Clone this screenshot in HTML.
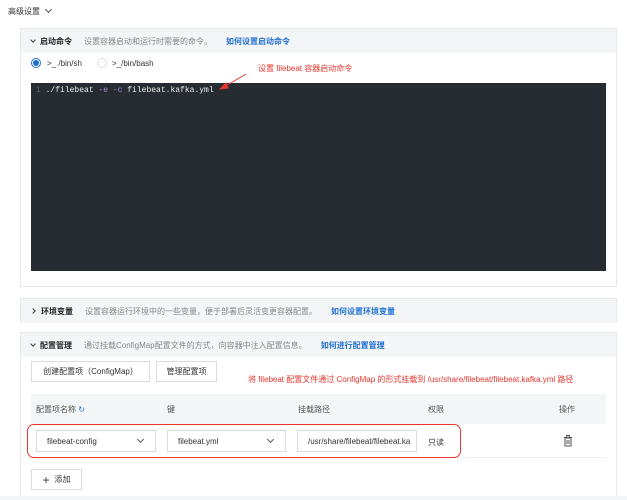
<!DOCTYPE html>
<html><head><meta charset="utf-8"><style>
*{box-sizing:border-box;margin:0;padding:0}
body{width:627px;height:500px;background:#fff;font-family:"Liberation Sans","Noto Sans CJK SC",sans-serif;font-size:8px;color:#333;position:relative;overflow:hidden}
.a{position:absolute;white-space:nowrap}
.panel{position:absolute;left:20px;width:597px;border:1px solid #e6e8eb;background:#fff}
.hd{height:24px;background:#f3f5f7;display:flex;align-items:center;padding-left:10px;font-size:8px}
.hd b{font-weight:bold;color:#222;margin-right:12px}
.hd .d{color:#888;margin-right:14px}
.hd .l{color:#1f6fd1;font-weight:bold}
.btn{position:absolute;border:1px solid #d8dbe0;background:#fff;display:flex;align-items:center;justify-content:center;font-size:8px;color:#333}
.sel{position:absolute;border:1px solid #d8dbe0;height:22px;top:430px;display:flex;align-items:center;padding-left:10px;font-size:8px;color:#333}
.red{color:#e8352e}
</style></head><body>
<div class="a" style="left:8px;top:6px;font-size:8px">高级设置 <span style="display:inline-block;width:5px;height:5px;border-right:1px solid #555;border-bottom:1px solid #555;transform:rotate(45deg);margin-left:4px;position:relative;top:-2px"></span></div>

<div class="panel" style="top:28px;height:259px">
 <div class="hd"><span style="display:inline-block;width:4px;height:4px;border-right:1px solid #444;border-bottom:1px solid #444;transform:rotate(45deg);margin-right:5px;position:relative;top:-1px"></span><b>启动命令</b><span class="d">设置容器启动和运行时需要的命令。</span><span class="l">如何设置启动命令</span></div>
</div>
<div class="a" style="left:31px;top:58px;width:10px;height:10px;border-radius:50%;border:1px solid #1f6fd1;background:#fff"><div style="width:6px;height:6px;margin:1px;border-radius:50%;background:#1f6fd1"></div></div>
<div class="a" style="left:47px;top:59px;font-size:8px">&gt;_ /bin/sh</div>
<div class="a" style="left:97px;top:58px;width:10px;height:10px;border-radius:50%;border:1px solid #ddd"></div>
<div class="a" style="left:112px;top:59px;font-size:8px">&gt;_/bin/bash</div>
<div class="a red" style="left:258px;top:63px;font-size:8px">设置 filebeat 容器启动命令</div>
<div class="a" style="left:31px;top:83px;width:575px;height:188px;background:#272c33"></div>
<div class="a" style="left:36px;top:86px;font-family:'Liberation Mono',monospace;font-size:8px;color:#eee"><span style="color:#666">1</span> ./filebeat <span style="color:#a48ad6">-e -c</span> filebeat.kafka.yml</div>
<svg class="a" style="left:0;top:0" width="627" height="500"><g stroke="#e8352e" fill="#e8352e" stroke-width="1"><line x1="246" y1="74" x2="224" y2="87"/><polygon points="220,89 226,83 228,88"/><line x1="262" y1="392" x2="258" y2="416"/><polygon points="257,421 254,414 261,415"/></g></svg>

<div class="panel" style="top:298px;height:24px"><div class="hd"><span style="display:inline-block;width:4px;height:4px;border-right:1px solid #444;border-bottom:1px solid #444;transform:rotate(-45deg);margin-right:6px"></span><b>环境变量</b><span class="d">设置容器运行环境中的一些变量，便于部署后灵活变更容器配置。</span><span class="l">如何设置环境变量</span></div></div>

<div class="panel" style="top:332px;height:166px;border-bottom:none"><div class="hd"><span style="display:inline-block;width:4px;height:4px;border-right:1px solid #444;border-bottom:1px solid #444;transform:rotate(45deg);margin-right:5px;position:relative;top:-1px"></span><b>配置管理</b><span class="d">通过挂载ConfigMap配置文件的方式，向容器中注入配置信息。</span><span class="l">如何进行配置管理</span></div></div>
<div class="btn" style="left:31px;top:361px;width:119px;height:21px">创建配置项（ConfigMap）</div>
<div class="btn" style="left:156px;top:361px;width:61px;height:21px">管理配置项</div>
<div class="a red" style="left:248px;top:374px;font-size:8px">将 filebeat 配置文件通过 ConfigMap 的形式挂载到 /usr/share/filebeat/filebeat.kafka.yml 路径</div>
<div class="a" style="left:31px;top:394px;width:575px;height:30px;background:#f3f5f7"></div>
<div class="a" style="left:36px;top:404px;color:#555">配置项名称 <span style="color:#1f6fd1">↻</span></div>
<div class="a" style="left:167px;top:404px;color:#555">键</div>
<div class="a" style="left:298px;top:404px;color:#555">挂载路径</div>
<div class="a" style="left:428px;top:404px;color:#555">权限</div>
<div class="a" style="left:559px;top:404px;color:#555">操作</div>
<div class="a" style="left:31px;top:457px;width:575px;height:1px;background:#eee"></div>
<div class="sel" style="left:36px;width:120px">filebeat-config<span style="position:absolute;right:12px;top:6px;width:5px;height:5px;border-right:1px solid #555;border-bottom:1px solid #555;transform:rotate(45deg)"></span></div>
<div class="sel" style="left:167px;width:119px">filebeat.yml<span style="position:absolute;right:12px;top:6px;width:5px;height:5px;border-right:1px solid #555;border-bottom:1px solid #555;transform:rotate(45deg)"></span></div>
<div class="sel" style="left:297px;width:120px;overflow:hidden">/usr/share/filebeat/filebeat.ka</div>
<div class="a" style="left:428px;top:437px">只读</div>
<svg class="a" style="left:563px;top:435px" width="10" height="12"><g fill="none" stroke="#555" stroke-width="1"><line x1="1" y1="2.5" x2="9" y2="2.5"/><rect x="3.5" y="0.5" width="3" height="2"/><rect x="2" y="3" width="6" height="8"/><line x1="4" y1="5" x2="4" y2="9"/><line x1="6" y1="5" x2="6" y2="9"/></g></svg>
<div class="a" style="left:27px;top:424px;width:434px;height:34px;border:1.5px solid #e8352e;border-radius:7px"></div>
<div class="btn" style="left:31px;top:469px;width:51px;height:21px"><span style="font-size:12px;margin-right:5px">+</span>添加</div>
<div class="a" style="left:0;top:496px;width:627px;height:4px;background:#f3f5f7"></div>
</body></html>
